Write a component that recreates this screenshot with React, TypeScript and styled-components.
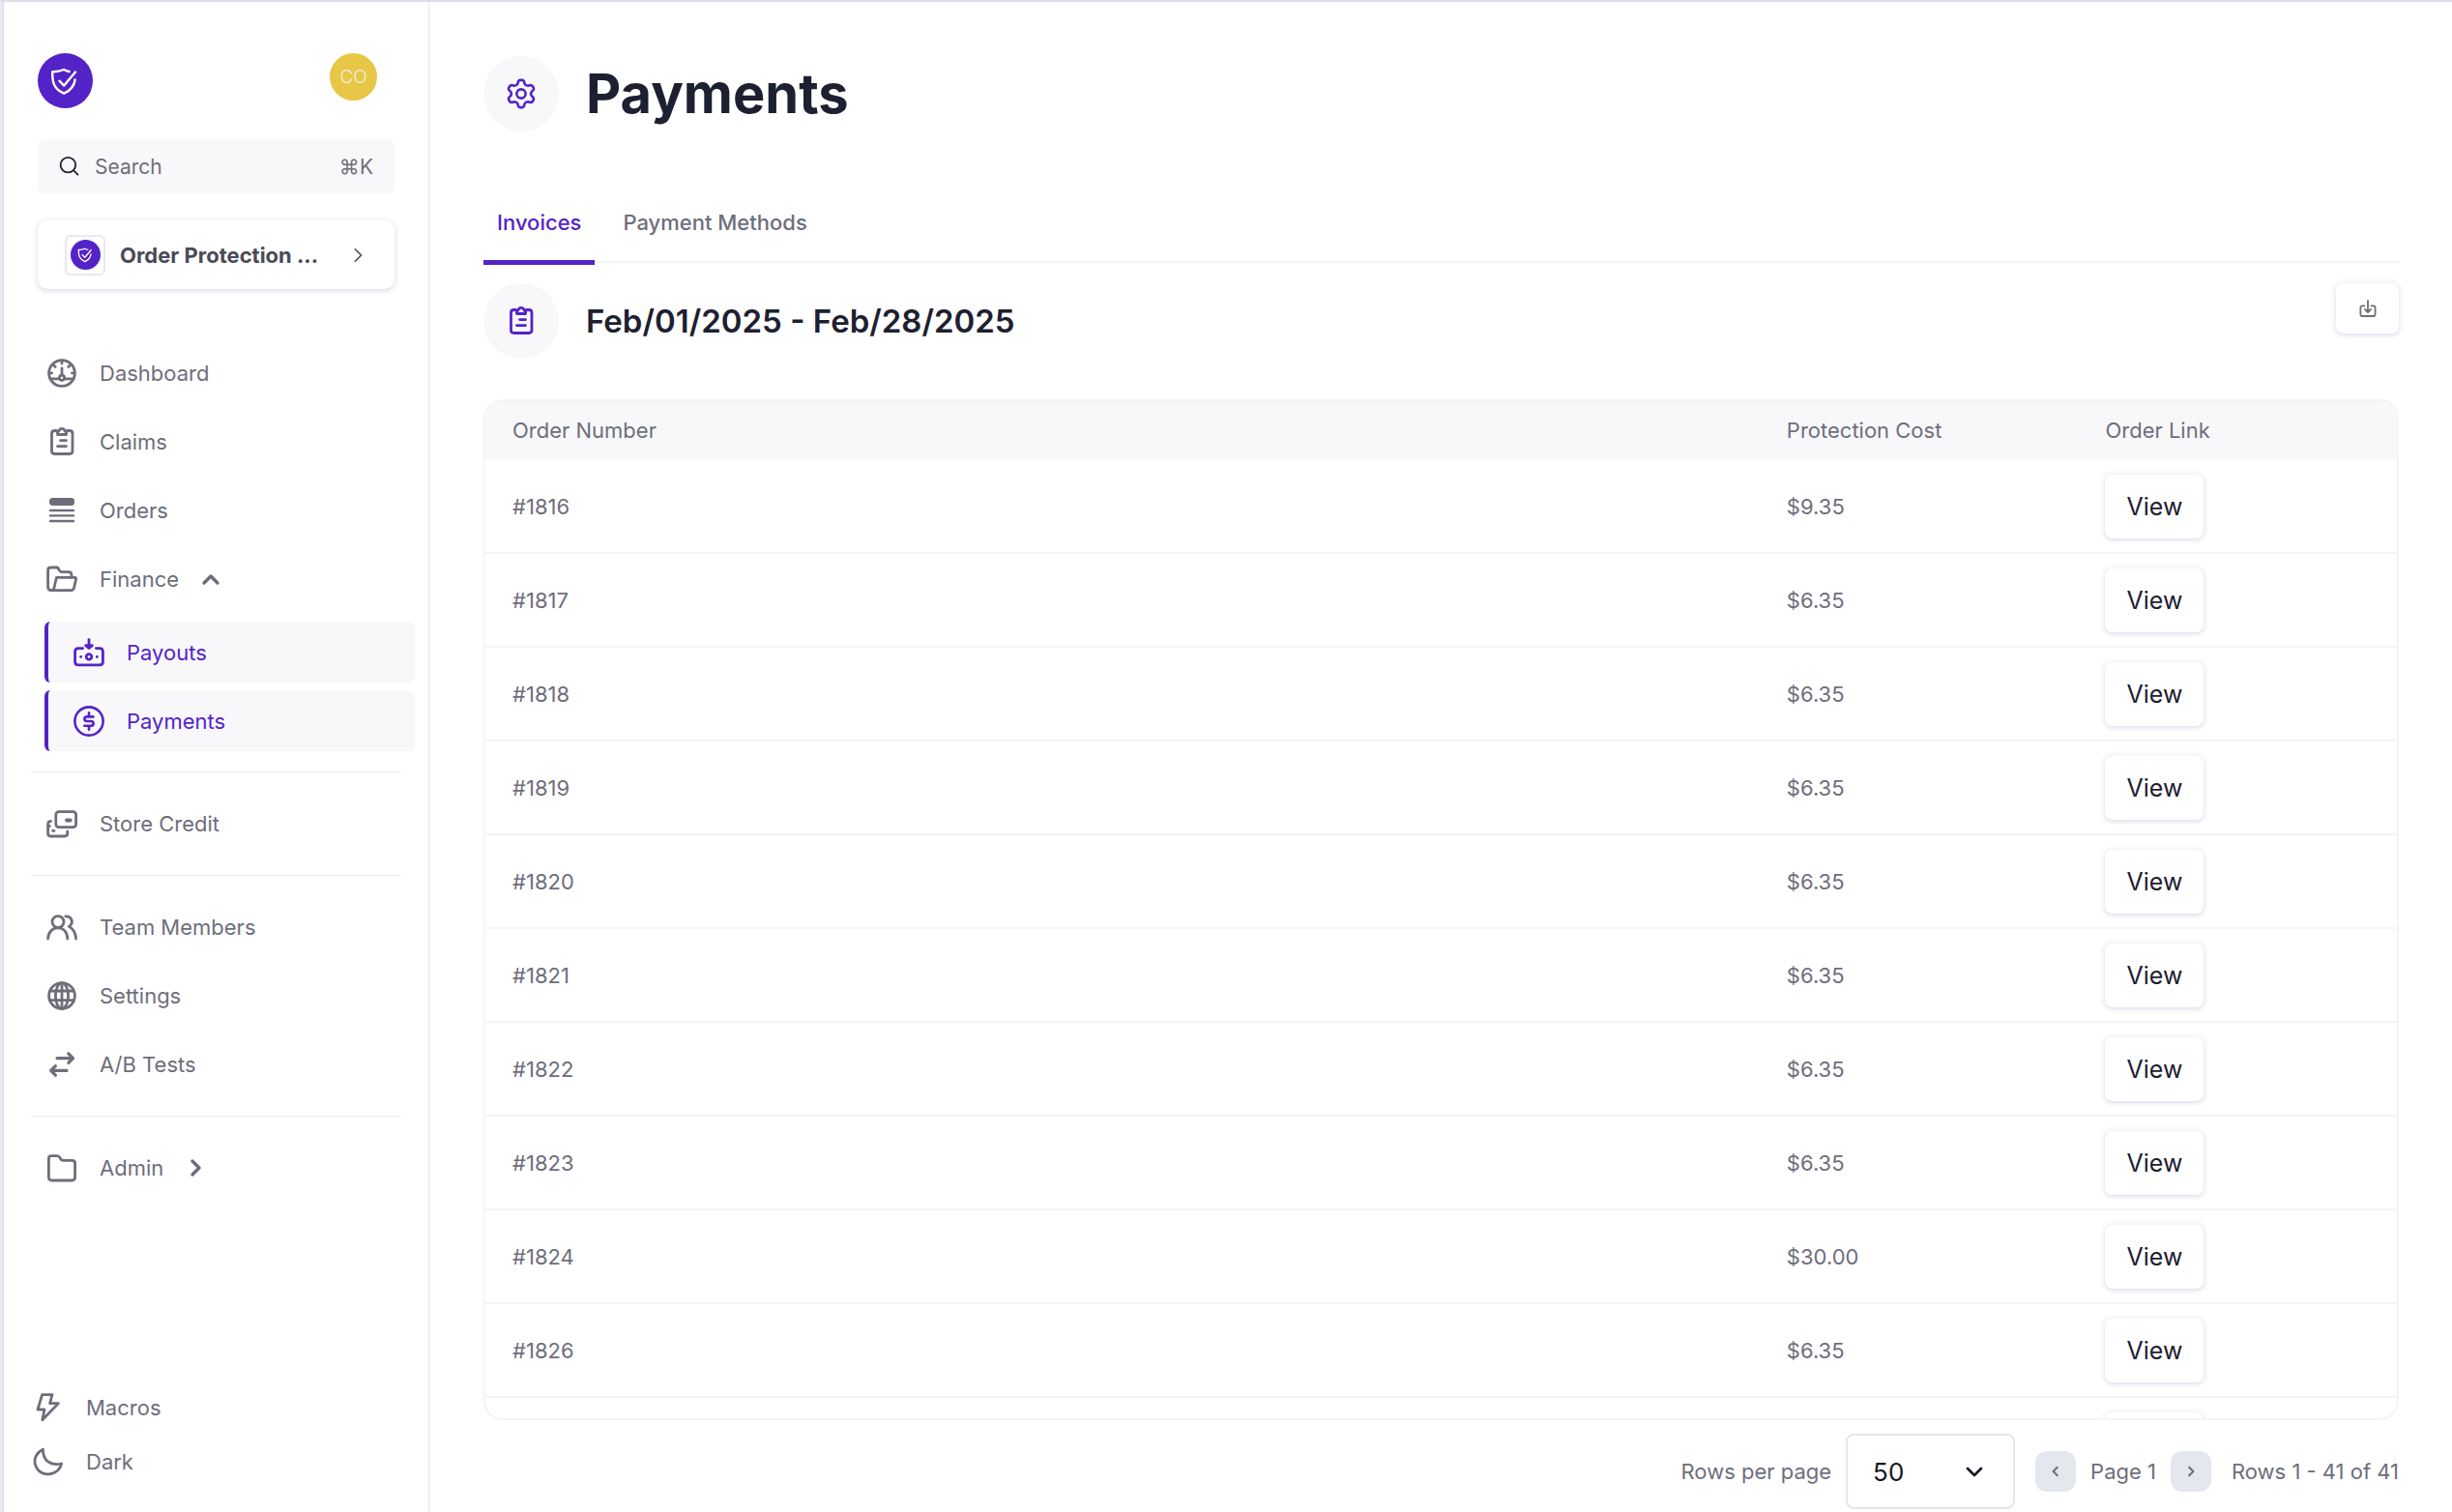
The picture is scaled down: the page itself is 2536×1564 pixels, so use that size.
import React from "react";
import styled, { createGlobalStyle } from "styled-components";

const c = {
  purple: "#5423c8",
  gray: "#6e6e7b",
  dark: "#1d2030",
  soft: "#f8f8fb",
  line: "#f3f4f8",
  edge: "#e3e6ee",
  page: "#ffffff",
};
const shadow = "0 0 4px 3px rgba(80, 84, 160, 0.05), 0 2px 4px rgba(70, 74, 130, 0.12)";

const Global = createGlobalStyle`
  *, *::before, *::after { box-sizing: border-box; }
  body { margin: 0; background: ${c.page}; }
  body, button, input, select { font-family: Inter, "Liberation Sans", sans-serif; }
  button { cursor: pointer; }
`;

const Shell = styled.div`
  display: flex;
  height: 100vh;
  overflow: hidden;
  border-left: 3px solid #e7eaf1;
  border-top: 2px solid #dcdde6;
  color: ${c.gray};
  font-size: 22px;
  line-height: 32px;
`;

const Sidebar = styled.aside`
  flex: 0 0 441px;
  min-width: 0;
  display: flex;
  flex-direction: column;
  border-left: 1px solid #d9dbe4;
  border-right: 1px solid ${c.edge};
  padding: 53px 28px 24px;
`;

const Brand = styled.div`
  display: flex;
  justify-content: space-between;
  align-items: flex-start;
  padding: 0 25px 0 7px;
`;

const Logo = styled.a`
  display: block;
  height: 57px;
`;

const Avatar = styled.button`
  width: 49px;
  height: 49px;
  padding: 0;
  border: 0;
  border-radius: 50%;
  background: #e8c646;
  color: #f4efe0;
  font-size: 19px;
  font-weight: 300;
`;

const SearchBox = styled.label`
  display: flex;
  align-items: center;
  gap: 15px;
  height: 56px;
  margin: 32px 7px 0;
  padding: 0 22px;
  border-radius: 6px;
  background: ${c.soft};
`;

const SearchInput = styled.input`
  flex: 1;
  width: 100%;
  min-width: 0;
  padding: 0;
  border: 0;
  outline: 0;
  background: transparent;
  color: ${c.gray};
  font-size: 21px;
  &::placeholder { color: ${c.gray}; opacity: 1; }
`;

const Shortcut = styled.kbd`
  font: 400 21px Inter, "DejaVu Sans", sans-serif;
`;

const StoreButton = styled.button`
  display: flex;
  align-items: center;
  gap: 15px;
  height: 71px;
  margin: 28px 7px 0;
  padding: 0 29px 0 28px;
  border: 0;
  border-radius: 10px;
  background: #fff;
  box-shadow: ${shadow};
  color: #4a4a57;
  font-size: 22px;
  font-weight: 700;
  text-align: left;
`;

const StoreIcon = styled.span`
  display: grid;
  place-items: center;
  flex: none;
  width: 42px;
  height: 42px;
  border: 2px solid #e9e8f2;
  border-radius: 6px;
`;

const StoreName = styled.span`
  flex: 1;
  white-space: nowrap;
`;

const Nav = styled.nav`
  display: flex;
  flex-direction: column;
  gap: 7px;
  margin-top: 55px;
`;

const NavLink = styled.a`
  display: flex;
  align-items: center;
  gap: 23px;
  height: 64px;
  padding-left: 16px;
  color: ${c.gray};
  text-decoration: none;
`;

const NavToggle = styled.button`
  display: flex;
  align-items: center;
  gap: 23px;
  height: 64px;
  padding: 0 0 0 16px;
  border: 0;
  background: none;
  color: ${c.gray};
  font-size: 22px;
`;

const SubNav = styled.div`
  display: flex;
  flex-direction: column;
  gap: 8px;
  margin: 5px -14px 0 14px;
`;

const SubLink = styled.a`
  display: flex;
  align-items: center;
  gap: 23px;
  height: 63px;
  padding-left: 26px;
  border-left: 4px solid ${c.purple};
  border-radius: 6px;
  background: ${c.soft};
  color: ${c.purple};
  text-decoration: none;
`;

const Divider = styled.hr`
  width: 100%;
  height: 1px;
  margin: 14px 0;
  border: 0;
  background: #ececf3;
`;

const Footer = styled.div`
  display: flex;
  flex-direction: column;
  margin-top: auto;
`;

const FooterButton = styled.button`
  display: flex;
  align-items: center;
  gap: 23px;
  height: 56px;
  padding: 0 0 0 2px;
  border: 0;
  background: none;
  color: ${c.gray};
  font-size: 22px;
`;

const Main = styled.main`
  flex: 1;
  min-width: 0;
  display: flex;
  flex-direction: column;
  padding: 56px 55px 3px 56px;
`;

const TitleRow = styled.header`
  display: flex;
  align-items: center;
  gap: 28px;
`;

const RoundIcon = styled.span`
  display: grid;
  place-items: center;
  flex: none;
  width: 78px;
  height: 78px;
  border-radius: 50%;
  background: ${c.soft};
  color: ${c.purple};
`;

const Title = styled.h1`
  margin: 0;
  color: ${c.dark};
  font-size: 56px;
  line-height: 64px;
  font-weight: 700;
`;

const Tabs = styled.div`
  display: flex;
  gap: 15px;
  margin-top: 60px;
  border-bottom: 2px solid ${c.line};
`;

const Tab = styled.button<{ $active?: boolean }>`
  height: 78px;
  margin-bottom: -4px;
  padding: 0 14px 5px;
  border: 0;
  border-bottom: 5px solid ${(p) => (p.$active ? c.purple : "transparent")};
  background: none;
  color: ${(p) => (p.$active ? c.purple : c.gray)};
  font-size: 22px;
  font-weight: 500;
`;

const PeriodRow = styled.div`
  display: flex;
  align-items: center;
  gap: 28px;
  margin-top: 21px;
`;

const Period = styled.h2`
  flex: 1;
  margin: 0;
  color: ${c.dark};
  font-size: 33px;
  line-height: 40px;
  font-weight: 600;
`;

const IconButton = styled.button`
  display: grid;
  place-items: center;
  align-self: flex-start;
  width: 65px;
  height: 52px;
  padding: 0;
  border: 0;
  border-radius: 8px;
  background: #fff;
  box-shadow: ${shadow};
  color: ${c.gray};
`;

const TableFrame = styled.section`
  flex: 1;
  min-height: 0;
  margin-top: 42px;
  overflow: hidden;
  border: 2px solid ${c.line};
  border-radius: 20px;
`;

const Table = styled.table`
  width: 100%;
  table-layout: fixed;
  border-collapse: separate;
  border-spacing: 0;
`;

const Th = styled.th<{ $wide?: boolean }>`
  width: ${(p) => (p.$wide ? "66.66%" : "16.67%")};
  height: 61px;
  padding: 0 28px 2px;
  background: ${c.soft};
  font-weight: 400;
  text-align: left;
`;

const Td = styled.td`
  height: 97px;
  padding: 0 28px;
  border-bottom: 2px solid ${c.line};
`;

const ViewButton = styled.button`
  display: block;
  width: 102px;
  height: 66px;
  padding: 0;
  border: 0;
  border-radius: 8px;
  background: #fff;
  box-shadow: ${shadow};
  color: ${c.dark};
  font-size: 25px;
  font-weight: 400;
`;

const Pager = styled.footer`
  display: flex;
  justify-content: flex-end;
  align-items: center;
  gap: 15px;
  margin-top: 14px;
  white-space: nowrap;
`;

const PageSize = styled.label`
  display: flex;
  align-items: center;
  gap: 15px;
  margin-right: 6px;
`;

const SelectWrap = styled.span`
  display: grid;
  align-items: center;
  width: 175px;
  & > * { grid-area: 1 / 1; }
  & > svg { justify-self: end; margin-right: 32px; pointer-events: none; color: #14161f; }
`;

const Select = styled.select`
  width: 100%;
  height: 78px;
  padding: 0 26px;
  appearance: none;
  border: 2px solid ${c.edge};
  border-radius: 8px;
  background: #fff;
  color: #14161f;
  font-size: 26px;
`;

const PageButton = styled.button`
  display: grid;
  place-items: center;
  width: 42px;
  height: 42px;
  padding: 0;
  border: 0;
  border-radius: 12px;
  background: #e5e7ee;
  color: ${c.gray};
`;

const RowCount = styled.span`
  margin-left: 6px;
`;

const Svg = styled.svg`
  display: block;
  flex: none;
  fill: none;
  stroke: currentColor;
  stroke-linecap: round;
  stroke-linejoin: round;
`;

type Kids = { children: React.ReactNode; w?: number };
const Icon = ({ children, w = 3 }: Kids) => (
  <Svg width="32" height="32" viewBox="0 0 32 32" strokeWidth={w} aria-hidden>{children}</Svg>
);

const ShieldSvg = styled.svg`
  display: block;
  fill: none;
  stroke: #fff;
  stroke-width: 2.4;
  stroke-linejoin: round;
`;

const Shield = ({ size }: { size: number }) => (
  <ShieldSvg width={size} height={size} viewBox="0 0 57 57" aria-hidden>
    <circle cx="28.5" cy="28.5" r="28.5" fill={c.purple} stroke="none" />
    <path d="M33.6 19.2Q30 18.6 27 17Q21.5 19.4 15.2 19.2C15 30 16.5 37 27.2 41.6C34.5 38.5 38 33.5 38.8 26.5" />
    <path d="M21.8 28L27.2 33.6L39.6 18.8" />
  </ShieldSvg>
);

const chevrons = {
  up: "M3 14L10 7L17 14",
  down: "M3 7L10 14L17 7",
  right: "M7 3L14 10L7 17",
  left: "M13 3L6 10L13 17",
};

const Chevron = ({ dir, size, w }: { dir: keyof typeof chevrons; size: number; w: number }) => (
  <Svg width={size} height={size} viewBox="0 0 20 20" strokeWidth={w} aria-hidden><path d={chevrons[dir]} /></Svg>
);

const Clipboard = () => (
  <Icon w={2.8}>
    <path d="M10.5 4.5H8.5Q5.5 4.5 5.5 7.5V25.5Q5.5 28.5 8.5 28.5H24Q27 28.5 27 25.5V7.5Q27 4.5 24 4.5H21.5" />
    <path d="M11.5 8.5V5.5Q13 5.5 13.2 4Q14 2.4 16 2.4T18.8 4Q19 5.5 20.6 5.5V8.5Z" />
    <path d="M14.5 14.6H20.5M11.5 20.6H20.5" />
  </Icon>
);

// Six teeth around the hub: each tooth rises from radius 10.8 to radius 13.4.
const polar = (deg: number, r: number) => {
  const a = (deg * Math.PI) / 180;
  return `${(16 + r * Math.cos(a)).toFixed(2)} ${(16 + r * Math.sin(a)).toFixed(2)}`;
};
const gearPath =
  [0, 1, 2, 3, 4, 5]
    .map((k) => {
      const a = k * 60 - 90;
      return `${k ? "L" : "M"}${polar(a - 19, 11)}L${polar(a - 13, 13.2)}Q${polar(a - 9, 14.2)} ${polar(a - 5, 14.2)}L${polar(a + 5, 14.2)}Q${polar(a + 9, 14.2)} ${polar(a + 13, 13.2)}L${polar(a + 19, 11)}Q${polar(a + 30, 9.4)} ${polar(a + 41, 11)}`;
    })
    .join("") + "Z";

const Gear = () => (
  <Icon w={2.6}>
    <circle cx="16" cy="16" r="4.6" />
    <path d={gearPath} />
  </Icon>
);

const icons = {
  dashboard: (
    <Icon w={2.8}>
      <circle cx="16" cy="16" r="13.4" />
      <circle cx="16" cy="20.7" r="2.6" />
      <path d="M16 11V18M4 21.8H13M19 21.8H28M16 3V6M7.3 7.5L9.2 9.4M24.7 7.5L22.8 9.4M3 15.8H5.6M29 15.8H26.4" />
    </Icon>
  ),
  orders: (
    <Icon w={2.4}>
      <rect x="4.2" y="4.2" width="23.6" height="5.6" rx="2" fill="currentColor" />
      <path d="M4 16H28M4 21.4H28M4 27H28" />
    </Icon>
  ),
  finance: (
    <Icon w={2.8}>
      <path d="M5 27.6Q1.6 27.6 1.6 24V6.8Q1.6 4 4.6 4H10.4Q12 4 12.6 5.4L13.2 6.8Q14 8.6 16 8.6H23Q26 8.6 26 11.6V14" />
      <path d="M10.4 14.4H29.4Q31 14.4 30.6 16L28.6 25Q28 27.6 25.4 27.6H5Q7.4 27.6 8 25Z" />
    </Icon>
  ),
  payouts: (
    <Icon w={2.8}>
      <path d="M9.6 11.6H5Q1.6 11.6 1.6 15V25.4Q1.6 28.8 5 28.8H27Q30.4 28.8 30.4 25.4V15Q30.4 11.6 27 11.6H23.4" />
      <path d="M16 2.6V11" />
      <path d="M12.6 8.6L16 11.4L19.4 8.6Z" fill="currentColor" />
      <circle cx="16" cy="20.4" r="2.8" />
      <path d="M7.6 20.4H7.7M24.3 20.4H24.4" />
    </Icon>
  ),
  payments: (
    <Icon w={2.6}>
      <circle cx="16" cy="16" r="14.6" />
      <path d="M20.4 11.4H14Q11.4 11.4 11.4 13.7T14 16H18Q20.6 16 20.6 18.4T18 20.8H11.4M16 7.4V11.4M16 20.8V24.8" />
    </Icon>
  ),
  credit: (
    <Icon w={2.8}>
      <rect x="9.8" y="3.6" width="20.8" height="16" rx="3" />
      <path d="M21 12.6H24.6" strokeWidth="4" />
      <path d="M4.6 13.4Q1.6 13.6 1.6 16.6V26Q1.6 29 4.6 29H18.6Q21.8 29 21.8 26V24" />
      <path d="M2 18.6H3.4M6.6 23.4H8" />
    </Icon>
  ),
  team: (
    <Icon w={2.8}>
      <circle cx="12" cy="10.6" r="6" />
      <path d="M1.6 28C2 20.8 6.4 16.8 12 16.8S21.4 20.8 21.8 28M19.8 4.8C26.8 4.6 28.4 12 23.4 15.4Q30 19.2 30.6 28" />
    </Icon>
  ),
  globe: (
    <Icon w={2.8}>
      <circle cx="16" cy="16" r="13.4" />
      <ellipse cx="16" cy="16" rx="6.6" ry="13.4" />
      <path d="M16 3V29M4 11H28M4 20.6H28" />
    </Icon>
  ),
  tests: (
    <Icon w={3.2}>
      <path d="M11 9.6H27.4M22.8 4.8L27.6 9.6L22.8 14.4M21 22.4H4.8M9.4 17.6L4.6 22.4L9.4 27.2" />
    </Icon>
  ),
  admin: (
    <Icon w={2.8}>
      <path d="M5 3.6H11Q13 3.6 14 5.4L14.8 7Q15.6 8.4 17.6 8.4H26.6Q29.6 8.4 29.6 11.4V25.6Q29.6 29 26.4 29H5.4Q2.4 29 2.4 26V6.4Q2.4 3.6 5 3.6Z" />
    </Icon>
  ),
  bolt: (
    <Icon w={2.8}>
      <path d="M9.6 2.6H20L17.6 11.6H26.4L9.8 28.8L12 18H5Z" />
    </Icon>
  ),
  moon: (
    <Icon w={2.8}>
      <path d="M10.4 3.2C3.6 6.6 0.6 13 2.6 19.4C4.6 26 10.6 29.6 17 28.8C23.6 28 28.6 23.6 29.6 18C18 20.6 10.4 14.8 10.4 3.2Z" />
    </Icon>
  ),
};

const orders: [string, string][] = [
  ["#1816", "$9.35"], ["#1817", "$6.35"], ["#1818", "$6.35"], ["#1819", "$6.35"],
  ["#1820", "$6.35"], ["#1821", "$6.35"], ["#1822", "$6.35"], ["#1823", "$6.35"],
  ["#1824", "$30.00"], ["#1826", "$6.35"],
];

export default function App() {
  return (
    <>
      <Global />
      <Shell>
        <Sidebar>
          <Brand>
            <Logo href="#" aria-label="Home"><Shield size={57} /></Logo>
            <Avatar>CO</Avatar>
          </Brand>
          <SearchBox>
            <Svg width="22" height="22" viewBox="0 0 22 22" strokeWidth="1.8" color={c.dark} aria-hidden>
              <circle cx="9.4" cy="9.6" r="7.8" /><path d="M15 15.2L19.4 19.6" />
            </Svg>
            <SearchInput placeholder="Search" aria-label="Search" />
            <Shortcut>⌘K</Shortcut>
          </SearchBox>
          <StoreButton>
            <StoreIcon><Shield size={31} /></StoreIcon>
            <StoreName>Order Protection ...</StoreName>
            <Chevron dir="right" size={18} w={1.8} />
          </StoreButton>
          <Nav>
            <NavLink href="#">{icons.dashboard}Dashboard</NavLink>
            <NavLink href="#"><Clipboard />Claims</NavLink>
            <NavLink href="#">{icons.orders}Orders</NavLink>
            <NavToggle aria-expanded="true">{icons.finance}Finance<Chevron dir="up" size={20} w={3.4} /></NavToggle>
            <SubNav>
              <SubLink href="#">{icons.payouts}Payouts</SubLink>
              <SubLink href="#">{icons.payments}Payments</SubLink>
            </SubNav>
            <Divider />
            <NavLink href="#">{icons.credit}Store Credit</NavLink>
            <Divider />
            <NavLink href="#">{icons.team}Team Members</NavLink>
            <NavLink href="#">{icons.globe}Settings</NavLink>
            <NavLink href="#">{icons.tests}A/B Tests</NavLink>
            <Divider />
            <NavToggle aria-expanded="false">{icons.admin}Admin<Chevron dir="right" size={20} w={3.4} /></NavToggle>
          </Nav>
          <Footer>
            <FooterButton>{icons.bolt}Macros</FooterButton>
            <FooterButton>{icons.moon}Dark</FooterButton>
          </Footer>
        </Sidebar>
        <Main>
          <TitleRow>
            <RoundIcon><Gear /></RoundIcon>
            <Title>Payments</Title>
          </TitleRow>
          <Tabs role="tablist">
            <Tab role="tab" aria-selected="true" $active>Invoices</Tab>
            <Tab role="tab" aria-selected="false">Payment Methods</Tab>
          </Tabs>
          <PeriodRow>
            <RoundIcon><Clipboard /></RoundIcon>
            <Period>Feb/01/2025 - Feb/28/2025</Period>
            <IconButton aria-label="Download">
              <Svg width="20" height="20" viewBox="0 0 20 20" strokeWidth="1.8" aria-hidden>
                <path d="M6.4 7.4H4.4Q2.4 7.4 2.4 9.4V16Q2.4 18 4.4 18H15.6Q17.6 18 17.6 16V9.4Q17.6 7.4 15.6 7.4H13.6M10 2V13.6M7 11L10 14L13 11" />
              </Svg>
            </IconButton>
          </PeriodRow>
          <TableFrame>
            <Table>
              <thead>
                <tr><Th $wide>Order Number</Th><Th>Protection Cost</Th><Th>Order Link</Th></tr>
              </thead>
              <tbody>
                {orders.map(([id, cost]) => (
                  <tr key={id}>
                    <Td>{id}</Td>
                    <Td>{cost}</Td>
                    <Td><ViewButton>View</ViewButton></Td>
                  </tr>
                ))}
                <tr aria-hidden>
                  <Td />
                  <Td />
                  <Td><ViewButton tabIndex={-1} /></Td>
                </tr>
              </tbody>
            </Table>
          </TableFrame>
          <Pager>
            <PageSize>
              Rows per page
              <SelectWrap>
                <Select defaultValue="50"><option>25</option><option>50</option><option>100</option></Select>
                <Chevron dir="down" size={20} w={2.6} />
              </SelectWrap>
            </PageSize>
            <PageButton aria-label="Previous page"><Chevron dir="left" size={12} w={3.4} /></PageButton>
            <span>Page 1</span>
            <PageButton aria-label="Next page"><Chevron dir="right" size={12} w={3.4} /></PageButton>
            <RowCount>Rows 1 - 41 of 41</RowCount>
          </Pager>
        </Main>
      </Shell>
    </>
  );
}
